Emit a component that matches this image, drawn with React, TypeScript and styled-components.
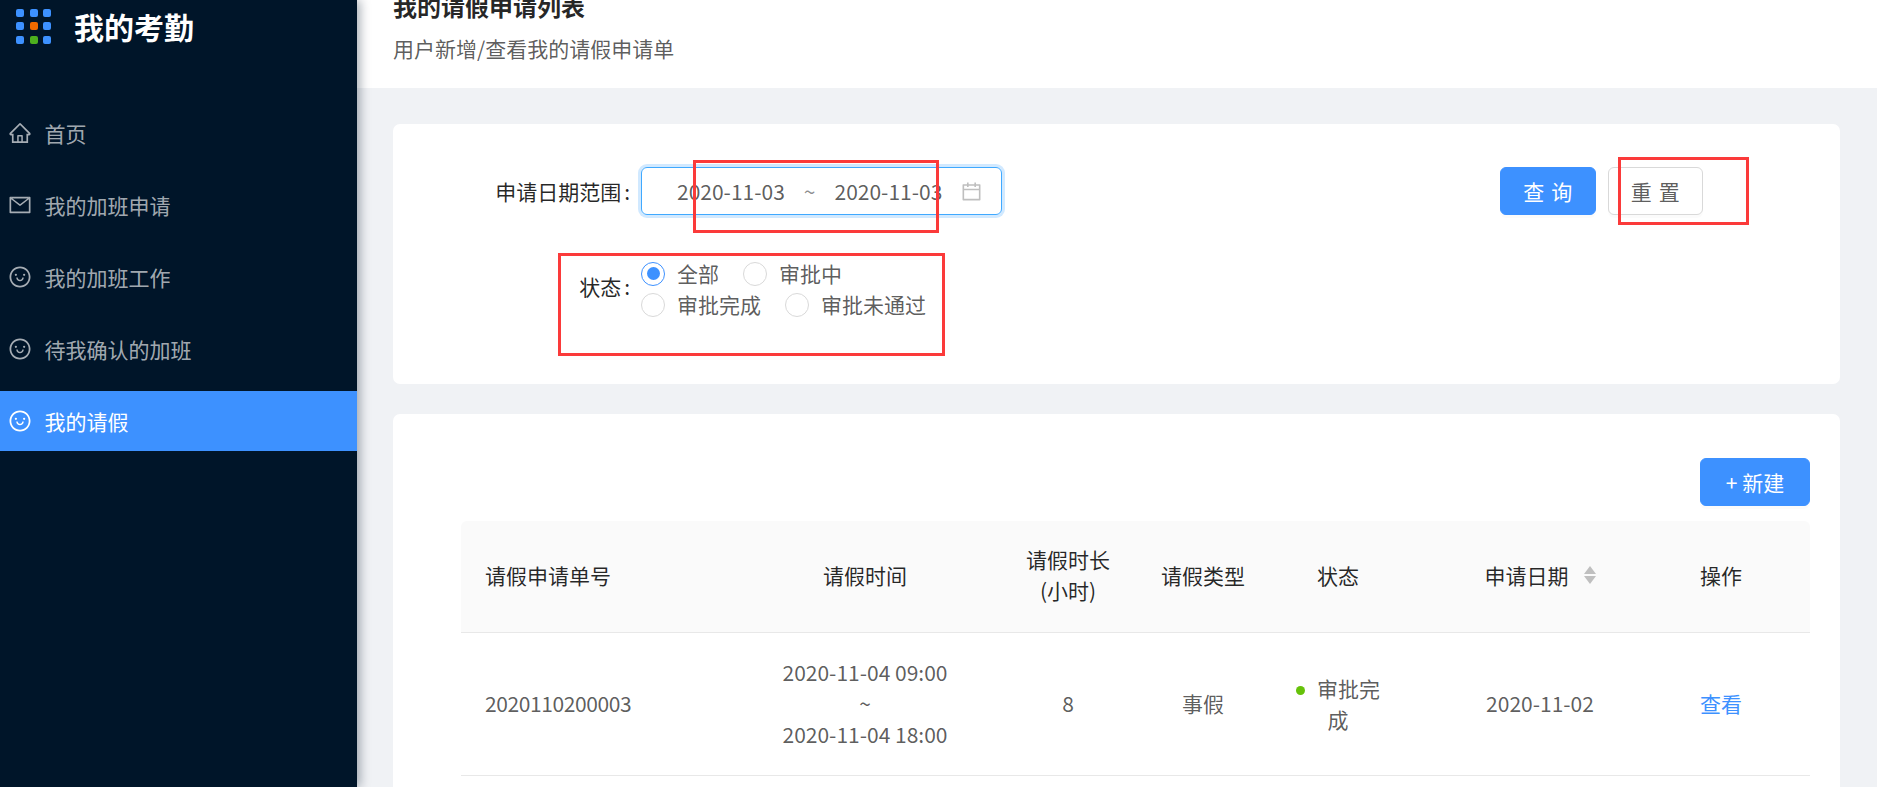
import { FC, ReactNode } from 'react';
import styled, { createGlobalStyle } from 'styled-components';
import {
  AiOutlineCalendar,
  AiOutlineHome,
  AiOutlineMail,
  AiOutlineSmile,
} from 'react-icons/ai';

const PRIMARY = '#3d91ff';

const GlobalStyle = createGlobalStyle`
  html, body, #root {
    margin: 0;
    height: 100%;
  }

  body {
    font-family: "Noto Sans CJK SC", "Liberation Sans", sans-serif;
    font-size: 21px;
    line-height: 31px;
    color: rgba(0, 0, 0, 0.65);
    overflow: hidden;
  }

  * {
    box-sizing: border-box;
  }
`;

const Page = styled.div`
  position: relative;
  display: flex;
  width: 100%;
  height: 100vh;
  overflow: hidden;
  background: #f0f2f5;
`;

const Sidebar = styled.aside`
  flex: 0 0 357px;
  background: #001529;
  box-shadow: 3px 0 10px rgba(0, 21, 41, 0.35);
  z-index: 2;
`;

const Brand = styled.div`
  display: flex;
  align-items: center;
  gap: 23px;
  height: 52px;
  padding-left: 16px;
`;

const BrandDots = styled.div`
  display: grid;
  grid-template-columns: repeat(3, 8px);
  grid-auto-rows: 8px;
  gap: 5.5px;
`;

const BrandDot = styled.span<{ $color: string }>`
  border-radius: 2px;
  background: ${({ $color }) => $color};
`;

const BrandName = styled.div`
  font-size: 30px;
  font-weight: 700;
  color: #fff;
`;

const Menu = styled.nav`
  display: flex;
  flex-direction: column;
  gap: 12px;
  margin-top: 51px;
`;

const MenuItem = styled.a<{ $active?: boolean }>`
  display: flex;
  align-items: center;
  gap: 13px;
  height: 60px;
  padding-left: 7.5px;
  color: ${({ $active }) => ($active ? '#fff' : 'rgba(255, 255, 255, 0.65)')};
  background: ${({ $active }) => ($active ? PRIMARY : 'transparent')};

  svg {
    font-size: 24px;
  }
`;

const Main = styled.main`
  flex: 1;
  min-width: 0;
  display: flex;
  flex-direction: column;
`;

const PageHeader = styled.header`
  flex: 0 0 88px;
  padding: 0 36px;
  background: #fff;
  overflow: hidden;
`;

const PageTitle = styled.h1`
  margin: -12px 0 0;
  font-size: 24px;
  line-height: 36px;
  font-weight: 700;
  color: rgba(0, 0, 0, 0.85);
`;

const PageDesc = styled.p`
  margin: 9px 0 0;
  color: rgba(0, 0, 0, 0.65);
`;

const Content = styled.div`
  flex: 1;
  display: flex;
  flex-direction: column;
  gap: 30px;
  padding: 36px 37px 0 36px;
`;

const FilterCard = styled.section`
  display: flex;
  flex-direction: column;
  gap: 43px;
  padding: 43px 0 64px;
  border-radius: 7px;
  background: #fff;
`;

const FormRow = styled.div`
  display: flex;
  align-items: center;
`;

const FormLabel = styled.label<{ $raised?: boolean }>`
  flex: 0 0 237px;
  margin-right: 11px;
  padding-bottom: ${({ $raised }) => ($raised ? '5px' : '0')};
  text-align: right;
  color: rgba(0, 0, 0, 0.85);
`;

const Colon = styled.span`
  margin-left: 3px;
`;

const RangePicker = styled.div`
  display: flex;
  align-items: center;
  width: 361px;
  height: 48px;
  padding: 0 18px 0 35px;
  border: 1.5px solid #40a9ff;
  border-radius: 6px;
  box-shadow: 0 0 0 3px rgba(24, 144, 255, 0.2);

  svg {
    margin-left: auto;
    font-size: 23px;
    color: #bfbfbf;
  }
`;

const RangeSeparator = styled.span`
  margin: 0 19px;
  color: rgba(0, 0, 0, 0.45);
`;

const Actions = styled.div`
  display: flex;
  gap: 12px;
  margin-left: auto;
  padding-right: 137px;
`;

const Button = styled.button<{ $primary?: boolean }>`
  height: 48px;
  padding: 0 24px;
  border: 1.5px solid ${({ $primary }) => ($primary ? PRIMARY : '#d9d9d9')};
  border-radius: 6px;
  font: inherit;
  color: ${({ $primary }) => ($primary ? '#fff' : 'rgba(0, 0, 0, 0.65)')};
  background: ${({ $primary }) => ($primary ? PRIMARY : '#fff')};
  box-shadow: 0 3px 0 rgba(0, 0, 0, 0.015);
`;

const SpacedButton = styled(Button)`
  width: 95.5px;
  padding: 0;
  letter-spacing: 0.34em;
  text-indent: 0.34em;
`;

const RadioGroup = styled.div`
  display: flex;
  flex-wrap: wrap;
  width: 320px;
`;

const RadioItem = styled.label`
  display: inline-flex;
  align-items: center;
  gap: 12px;
  margin-right: 24px;
`;

const RadioCircle = styled.span<{ $checked?: boolean }>`
  display: flex;
  align-items: center;
  justify-content: center;
  width: 24px;
  height: 24px;
  border: 1.5px solid ${({ $checked }) => ($checked ? PRIMARY : '#d9d9d9')};
  border-radius: 50%;

  &::after {
    content: '';
    display: ${({ $checked }) => ($checked ? 'block' : 'none')};
    width: 13px;
    height: 13px;
    border-radius: 50%;
    background: ${PRIMARY};
  }
`;

const ListCard = styled.section`
  flex: 1;
  padding: 44px 30px 0 68px;
  border-radius: 7px 7px 0 0;
  background: #fff;
`;

const ListToolbar = styled.div`
  display: flex;
  justify-content: flex-end;
  margin-bottom: 15px;
`;

const NewButton = styled(Button)`
  width: 110px;
  padding: 0;
`;

const Table = styled.table`
  width: 100%;
  table-layout: fixed;
  border-collapse: separate;
  border-spacing: 0;
`;

const Th = styled.th<{ $left?: boolean }>`
  padding: 23px 24px 26px;
  font-weight: 400;
  text-align: ${({ $left }) => ($left ? 'left' : 'center')};
  color: rgba(0, 0, 0, 0.85);
  background: #fafafa;
  border-bottom: 1.5px solid #e8e8e8;

  &:first-child {
    border-top-left-radius: 6px;
  }

  &:last-child {
    padding-right: 68px;
    border-top-right-radius: 6px;
  }
`;

const Td = styled.td<{ $left?: boolean }>`
  padding: 24px 24px 25px;
  text-align: ${({ $left }) => ($left ? 'left' : 'center')};
  border-bottom: 1.5px solid #e8e8e8;

  &:first-child {
    letter-spacing: -0.4px;
  }

  &:last-child {
    padding-right: 68px;
  }
`;

const SortHeader = styled.span`
  display: inline-flex;
  align-items: center;
  gap: 15px;
`;

const StatusDot = styled.span<{ $color: string }>`
  display: inline-block;
  width: 9px;
  height: 9px;
  margin-right: 12px;
  border-radius: 50%;
  vertical-align: middle;
  background: ${({ $color }) => $color};
`;

const Link = styled.a`
  color: ${PRIMARY};
`;

// red boxes someone drew on top of the screenshot
const Annotation = styled.div<{
  $left: number;
  $top: number;
  $width: number;
  $height: number;
}>`
  position: absolute;
  left: ${({ $left }) => $left}px;
  top: ${({ $top }) => $top}px;
  width: ${({ $width }) => $width}px;
  height: ${({ $height }) => $height}px;
  border: 3px solid #fb3a3a;
  z-index: 3;
`;

const SortIcon: FC = () => (
  <svg width="12" height="18" viewBox="0 0 12 18" fill="#bfbfbf">
    <path d="M6 0l6 8H0z" />
    <path d="M0 10h12l-6 8z" />
  </svg>
);

const dotColors = [
  PRIMARY,
  PRIMARY,
  PRIMARY,
  PRIMARY,
  '#f06a00',
  PRIMARY,
  PRIMARY,
  '#4caf1e',
  PRIMARY,
];

const menuItems: { icon: ReactNode; label: string; active?: boolean }[] = [
  { icon: <AiOutlineHome />, label: '首页' },
  { icon: <AiOutlineMail />, label: '我的加班申请' },
  { icon: <AiOutlineSmile />, label: '我的加班工作' },
  { icon: <AiOutlineSmile />, label: '待我确认的加班' },
  { icon: <AiOutlineSmile />, label: '我的请假', active: true },
];

const columnWidths = [267, 274, 132, 138, 132, 272, 134];

const App: FC = () => (
  <Page>
    <GlobalStyle />
    <Sidebar>
      <Brand>
        <BrandDots>
          {dotColors.map((color, i) => (
            <BrandDot key={i} $color={color} />
          ))}
        </BrandDots>
        <BrandName>我的考勤</BrandName>
      </Brand>
      <Menu>
        {menuItems.map((item) => (
          <MenuItem key={item.label} $active={item.active}>
            {item.icon}
            {item.label}
          </MenuItem>
        ))}
      </Menu>
    </Sidebar>

    <Main>
      <PageHeader>
        <PageTitle>我的请假申请列表</PageTitle>
        <PageDesc>用户新增/查看我的请假申请单</PageDesc>
      </PageHeader>

      <Content>
        <FilterCard>
          <FormRow>
            <FormLabel>
              申请日期范围<Colon>:</Colon>
            </FormLabel>
            <RangePicker>
              <span>2020-11-03</span>
              <RangeSeparator>~</RangeSeparator>
              <span>2020-11-03</span>
              <AiOutlineCalendar />
            </RangePicker>
            <Actions>
              <SpacedButton $primary>查询</SpacedButton>
              <SpacedButton>重置</SpacedButton>
            </Actions>
          </FormRow>
          <FormRow>
            <FormLabel $raised>
              状态<Colon>:</Colon>
            </FormLabel>
            <RadioGroup>
              <RadioItem>
                <RadioCircle $checked />
                全部
              </RadioItem>
              <RadioItem>
                <RadioCircle />
                审批中
              </RadioItem>
              <RadioItem>
                <RadioCircle />
                审批完成
              </RadioItem>
              <RadioItem>
                <RadioCircle />
                审批未通过
              </RadioItem>
            </RadioGroup>
          </FormRow>
        </FilterCard>

        <ListCard>
          <ListToolbar>
            <NewButton $primary>+ 新建</NewButton>
          </ListToolbar>
          <Table>
            <colgroup>
              {columnWidths.map((width, i) => (
                <col key={i} width={width} />
              ))}
            </colgroup>
            <thead>
              <tr>
                <Th $left>请假申请单号</Th>
                <Th>请假时间</Th>
                <Th>请假时长(小时)</Th>
                <Th>请假类型</Th>
                <Th>状态</Th>
                <Th>
                  <SortHeader>
                    申请日期
                    <SortIcon />
                  </SortHeader>
                </Th>
                <Th>操作</Th>
              </tr>
            </thead>
            <tbody>
              <tr>
                <Td $left>2020110200003</Td>
                <Td>
                  2020-11-04 09:00
                  <br />~<br />
                  2020-11-04 18:00
                </Td>
                <Td>8</Td>
                <Td>事假</Td>
                <Td>
                  <StatusDot $color="#66c20a" />
                  审批完成
                </Td>
                <Td>2020-11-02</Td>
                <Td>
                  <Link>查看</Link>
                </Td>
              </tr>
            </tbody>
          </Table>
        </ListCard>
      </Content>
    </Main>

    <Annotation $left={693} $top={160} $width={246} $height={73} />
    <Annotation $left={558} $top={253} $width={387} $height={103} />
    <Annotation $left={1618} $top={157} $width={131} $height={68} />
  </Page>
);

export default App;
